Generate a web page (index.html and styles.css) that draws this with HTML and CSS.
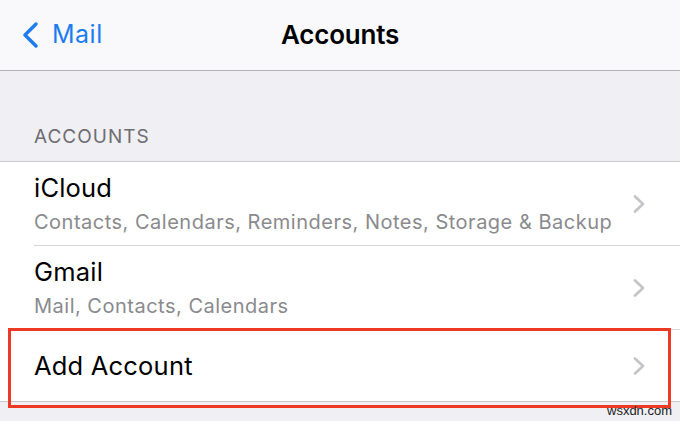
FILE: index.html
```html
<!DOCTYPE html>
<html>
<head>
<meta charset="utf-8">
<link rel="stylesheet" href="styles.css">
</head>
<body>
<div class="screen">
  <header class="nav">
    <div class="back">
      <svg class="back-icon" width="18" height="26" viewBox="0 0 18 26"><path d="M15 2 L4 13 L15 24" fill="none" stroke="#1f7cf0" stroke-width="3.4" stroke-linecap="round" stroke-linejoin="round"/></svg>
      <span class="back-label">Mail</span>
    </div>
    <div class="title">Accounts</div>
  </header>
  <div class="section-header">ACCOUNTS</div>
  <ul class="list">
    <li class="row two">
      <div class="texts">
        <div class="row-title">iCloud</div>
        <div class="row-sub">Contacts, Calendars, Reminders, Notes, Storage &amp; Backup</div>
      </div>
      <svg class="chev" width="14" height="18" viewBox="0 0 14 18"><path d="M3 1.5 L11 9 L3 16.5" fill="none" stroke="#c4c4c8" stroke-width="2.6" stroke-linecap="round" stroke-linejoin="round"/></svg>
    </li>
    <li class="row two">
      <div class="texts">
        <div class="row-title">Gmail</div>
        <div class="row-sub">Mail, Contacts, Calendars</div>
      </div>
      <svg class="chev" width="14" height="18" viewBox="0 0 14 18"><path d="M3 1.5 L11 9 L3 16.5" fill="none" stroke="#c4c4c8" stroke-width="2.6" stroke-linecap="round" stroke-linejoin="round"/></svg>
    </li>
    <li class="row one">
      <div class="texts">
        <div class="row-title">Add Account</div>
      </div>
      <svg class="chev" width="14" height="18" viewBox="0 0 14 18"><path d="M3 1.5 L11 9 L3 16.5" fill="none" stroke="#c4c4c8" stroke-width="2.6" stroke-linecap="round" stroke-linejoin="round"/></svg>
    </li>
  </ul>
  <div class="highlight"></div>
  <div class="watermark">wsxdn.com</div>
</div>
</body>
</html>
```

FILE: styles.css
```css
* { box-sizing: border-box; }
html, body { margin: 0; padding: 0; }
body {
  width: 680px;
  height: 421px;
  overflow: hidden;
  background: #efeff4;
  font-family: Inter, "Liberation Sans", sans-serif;
}
.screen {
  position: relative;
  width: 680px;
  height: 421px;
  background: #efeff4;
}
.nav {
  position: relative;
  height: 71px;
  background: #f9f9fb;
  border-bottom: 1px solid #b4b4b8;
  display: flex;
  align-items: center;
  justify-content: center;
}
.back {
  position: absolute;
  left: 21px;
  top: 21px;
  display: flex;
  align-items: center;
  gap: 13px;
  color: #1f7cf0;
}
.back-label {
  font-size: 25px;
  letter-spacing: 0.5px;
  margin-top: -2px;
}
.title {
  font-size: 26px;
  font-weight: 600;
  color: #000;
  letter-spacing: -0.2px;
  margin-top: -1px;
}
.section-header {
  height: 90px;
  padding: 0 0 0 34px;
  display: flex;
  align-items: flex-end;
  padding-bottom: 13px;
  font-size: 19px;
  color: #6d6d72;
  letter-spacing: 1px;
}
.list {
  list-style: none;
  margin: 0;
  padding: 0 0 0 34px;
  background: #fff;
  border-top: 1px solid #c8c7cc;
  border-bottom: 1px solid #c8c7cc;
}
.row {
  display: flex;
  align-items: center;
  padding-right: 34px;
  border-bottom: 1px solid #d6d6da;
}
.row:last-child { border-bottom: none; }
.row.two { height: 84px; }
.row.one { height: 71px; }
.texts { flex: 1; }
.row-title {
  font-size: 25.5px;
  color: #000;
  line-height: 30px;
  letter-spacing: 0.2px;
}
.row.two .row-title { margin-top: -1px; }
.row-sub {
  font-size: 20px;
  color: #8a8a8e;
  line-height: 24px;
  margin-top: 7px;
  letter-spacing: 0.5px;
}
.chev { flex: none; }
.highlight {
  position: absolute;
  left: 8px;
  top: 328px;
  width: 663px;
  height: 80px;
  border: 3px solid #ee3a24;
}
.watermark {
  position: absolute;
  left: 607px;
  top: 403px;
  font-size: 13px;
  font-family: "Liberation Sans", sans-serif;
  color: #222;
}
```
